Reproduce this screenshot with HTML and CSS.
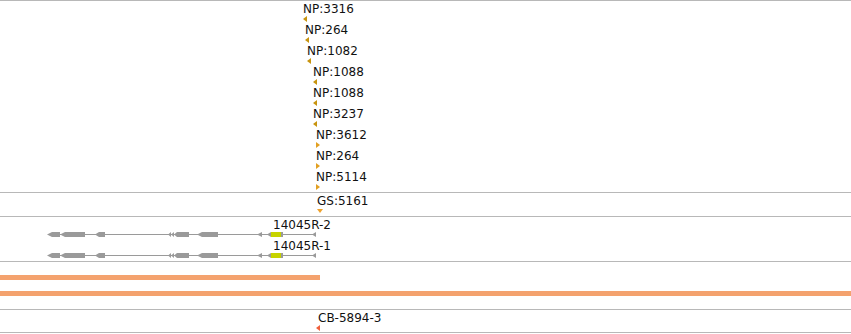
FILE: index.html
```html
<!DOCTYPE html>
<html lang="en">
<head>
    <meta charset="UTF-8">
    <title>Tracks</title>
    <link rel="stylesheet" href="styles.css">
</head>
<body>
    <div id="tracks">
        <!-- NP features -->
        <div class="track track-np">
            <div class="feat" style="left:303px;top:2px"><div class="lbl">NP:3316</div><div class="arr arr-left"></div></div>
            <div class="feat" style="left:305px;top:23px"><div class="lbl">NP:264</div><div class="arr arr-left"></div></div>
            <div class="feat" style="left:307px;top:44px"><div class="lbl">NP:1082</div><div class="arr arr-left"></div></div>
            <div class="feat" style="left:313px;top:65px"><div class="lbl">NP:1088</div><div class="arr arr-left"></div></div>
            <div class="feat" style="left:313px;top:86px"><div class="lbl">NP:1088</div><div class="arr arr-left"></div></div>
            <div class="feat" style="left:313px;top:107px"><div class="lbl">NP:3237</div><div class="arr arr-left"></div></div>
            <div class="feat" style="left:316px;top:128px"><div class="lbl">NP:3612</div><div class="arr arr-right"></div></div>
            <div class="feat" style="left:316px;top:149px"><div class="lbl">NP:264</div><div class="arr arr-right"></div></div>
            <div class="feat" style="left:316px;top:170px"><div class="lbl">NP:5114</div><div class="arr arr-right"></div></div>
        </div>

        <!-- GS -->
        <div class="track track-gs">
            <div class="feat" style="left:317px;top:2px"><div class="lbl">GS:5161</div><div class="arr arr-down"></div></div>
        </div>

        <!-- gene models -->
        <div class="track track-genes">
            <svg class="genes" width="851" height="44" viewBox="0 0 851 44">
                <g transform="translate(0,15)">
                    <rect x="52" y="2" width="261" height="1" fill="#9a9a9a"/>
                    <polygon points="47,2.5 52,0 52,5" fill="#9a9a9a"/>
                    <rect x="52" y="0" width="8" height="5" fill="#9a9a9a"/>
                    <polygon points="60,2.5 65,0 65,5" fill="#9a9a9a"/>
                    <rect x="65" y="0" width="20" height="5" fill="#9a9a9a"/>
                    <polygon points="95,2.5 99,0 99,5" fill="#9a9a9a"/>
                    <rect x="99" y="0" width="6" height="5" fill="#9a9a9a"/>
                    <polygon points="168,2.5 171,0 171,5" fill="#9a9a9a"/>
                    <polygon points="171,2.5 174,0 174,5" fill="#9a9a9a"/>
                    <polygon points="174,2.5 177,0 177,5" fill="#9a9a9a"/>
                    <rect x="177" y="0" width="12" height="5" fill="#9a9a9a"/>
                    <polygon points="197,2.5 202,0 202,5" fill="#9a9a9a"/>
                    <rect x="202" y="0" width="16" height="5" fill="#9a9a9a"/>
                    <polygon points="257,2.5 262,0 262,5" fill="#9a9a9a"/>
                    <polygon points="267,2.5 271,0 271,5" fill="#9a9a9a"/>
                    <rect x="271" y="0" width="10" height="5" fill="#c6d300"/>
                    <rect x="281" y="0" width="2" height="5" fill="#9a9a9a"/>
                    <polygon points="312,2.5 316,0 316,5" fill="#9a9a9a"/>
                </g>
                <g transform="translate(0,36)">
                    <rect x="52" y="2" width="261" height="1" fill="#9a9a9a"/>
                    <polygon points="47,2.5 52,0 52,5" fill="#9a9a9a"/>
                    <rect x="52" y="0" width="8" height="5" fill="#9a9a9a"/>
                    <polygon points="60,2.5 65,0 65,5" fill="#9a9a9a"/>
                    <rect x="65" y="0" width="20" height="5" fill="#9a9a9a"/>
                    <polygon points="95,2.5 99,0 99,5" fill="#9a9a9a"/>
                    <rect x="99" y="0" width="6" height="5" fill="#9a9a9a"/>
                    <polygon points="168,2.5 171,0 171,5" fill="#9a9a9a"/>
                    <polygon points="171,2.5 174,0 174,5" fill="#9a9a9a"/>
                    <polygon points="174,2.5 177,0 177,5" fill="#9a9a9a"/>
                    <rect x="177" y="0" width="12" height="5" fill="#9a9a9a"/>
                    <polygon points="197,2.5 202,0 202,5" fill="#9a9a9a"/>
                    <rect x="202" y="0" width="16" height="5" fill="#9a9a9a"/>
                    <polygon points="257,2.5 262,0 262,5" fill="#9a9a9a"/>
                    <polygon points="267,2.5 271,0 271,5" fill="#9a9a9a"/>
                    <rect x="271" y="0" width="10" height="5" fill="#c6d300"/>
                    <rect x="281" y="0" width="2" height="5" fill="#9a9a9a"/>
                    <polygon points="312,2.5 316,0 316,5" fill="#9a9a9a"/>
                </g>
            </svg>
            <div class="feat" style="left:273px;top:2px"><div class="lbl">14045R-2</div></div>
            <div class="feat" style="left:273px;top:23px"><div class="lbl">14045R-1</div></div>
        </div>

        <!-- coverage bars -->
        <div class="track track-bars">
            <div class="bar bar-short"></div>
            <div class="bar bar-full"></div>
        </div>

        <!-- CB -->
        <div class="track track-cb">
            <div class="feat" style="left:316px;top:2px"><div class="lbl lbl-cb">CB-5894-3</div><div class="arr arr-red"></div></div>
        </div>
    </div>
</body>
</html>
```

FILE: styles.css
```css
body {
    margin: 0;
    background: #fff;
    font-family: "DejaVu Sans", Verdana, sans-serif;
    color: #111;
}
#tracks {
    width: 851px;
    border-top: 1px solid #b8b8b8;
}
.track {
    position: relative;
    border-bottom: 1px solid #b8b8b8;
}
.track-np {
    height: 191px;
}
.track-gs {
    height: 23px;
}
.track-genes {
    height: 44px;
}
.track-bars {
    height: 48px;
    display: flex;
    flex-direction: column;
    gap: 11px;
    padding-top: 13px;
    box-sizing: border-box;
}
.track-cb {
    height: 22px;
}
.genes {
    display: block;
}
.feat {
    position: absolute;
}
.lbl {
    font-size: 12px;
    line-height: 13px;
    white-space: nowrap;
}
.lbl-cb {
    margin-left: 2px;
}
.arr {
    width: 0;
    height: 0;
}
.arr-left {
    border-top: 3px solid transparent;
    border-bottom: 3px solid transparent;
    border-right: 4px solid #c8940e;
}
.arr-right {
    border-top: 3px solid transparent;
    border-bottom: 3px solid transparent;
    border-left: 4px solid #e2a022;
}
.arr-down {
    border-left: 3px solid transparent;
    border-right: 3px solid transparent;
    border-top: 4px solid #efa22c;
    margin-top: 1px;
}
.arr-red {
    border-top: 3px solid transparent;
    border-bottom: 3px solid transparent;
    border-right: 4px solid #f0603c;
}
.bar {
    height: 5px;
    background: #f4a26e;
}
.bar-short {
    width: 320px;
}
.bar-full {
    width: 100%;
}
```
